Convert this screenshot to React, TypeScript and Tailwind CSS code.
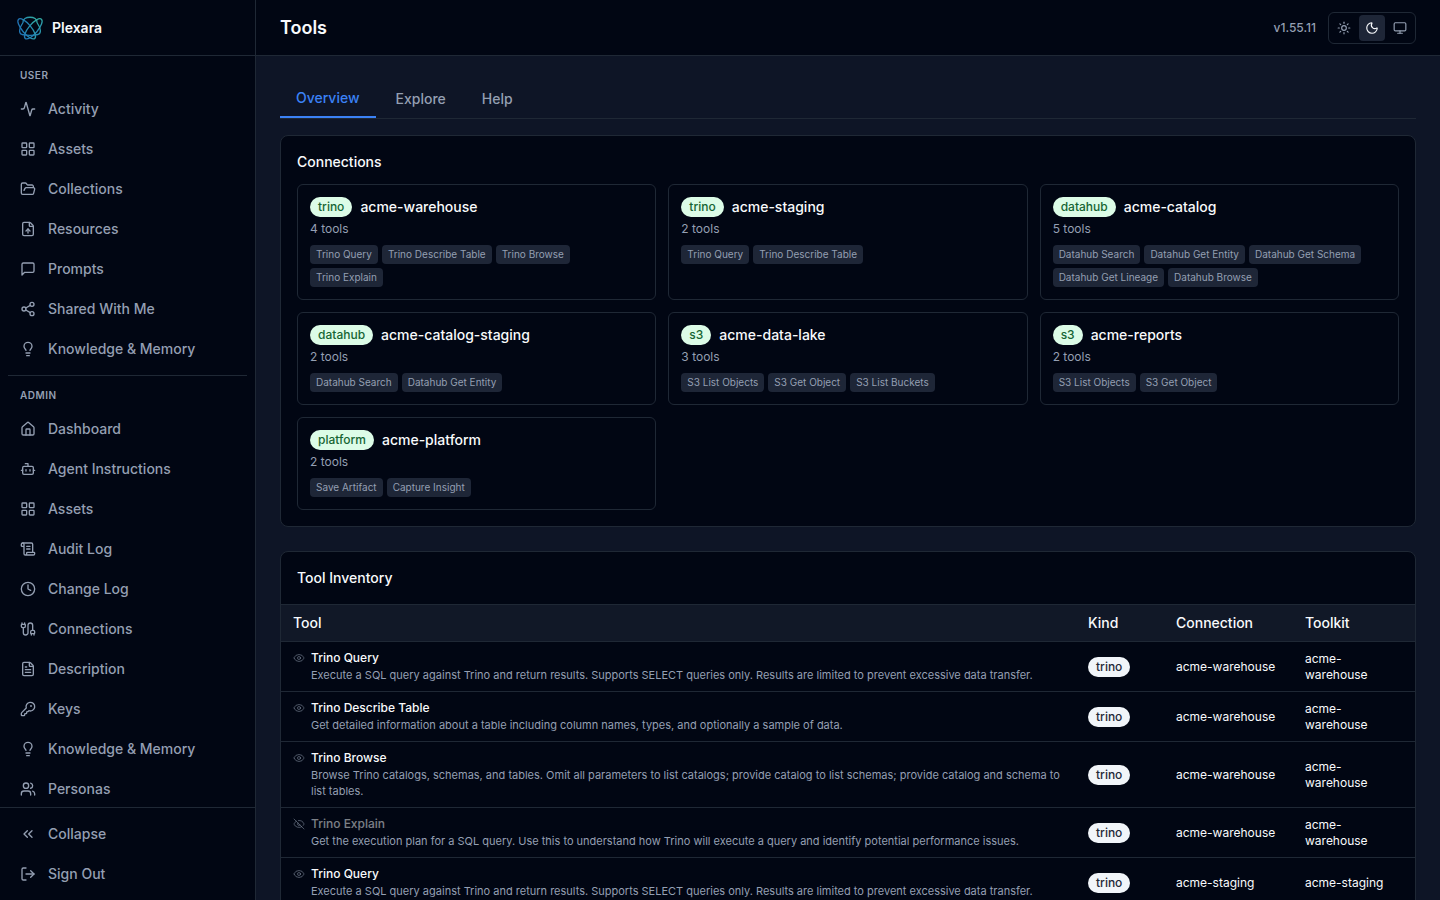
import { useState } from "react";
import type { ReactNode } from "react";
import {
  Activity,
  Bot,
  Cable,
  ChevronsLeft,
  Clock,
  Eye,
  EyeOff,
  FileText,
  FileUp,
  FolderOpen,
  House,
  KeyRound,
  LayoutGrid,
  Lightbulb,
  LogOut,
  Monitor,
  Moon,
  ScrollText,
  Share2,
  Sun,
  Users,
} from "lucide-react";

const userNav = [
  { name: "Activity", icon: Activity },
  { name: "Assets", icon: LayoutGrid },
  { name: "Collections", icon: FolderOpen },
  { name: "Resources", icon: FileUp },
  { name: "Prompts", icon: PromptIcon },
  { name: "Shared With Me", icon: Share2 },
  { name: "Knowledge & Memory", icon: Lightbulb },
];

const adminNav = [
  { name: "Dashboard", icon: House },
  { name: "Agent Instructions", icon: Bot },
  { name: "Assets", icon: LayoutGrid },
  { name: "Audit Log", icon: ScrollText },
  { name: "Change Log", icon: Clock },
  { name: "Connections", icon: Cable },
  { name: "Description", icon: FileText },
  { name: "Keys", icon: KeyRound },
  { name: "Knowledge & Memory", icon: Lightbulb },
  { name: "Personas", icon: Users },
];

const connections = [
  {
    kind: "trino",
    name: "acme-warehouse",
    tools: ["Trino Query", "Trino Describe Table", "Trino Browse", "Trino Explain"],
  },
  { kind: "trino", name: "acme-staging", tools: ["Trino Query", "Trino Describe Table"] },
  {
    kind: "datahub",
    name: "acme-catalog",
    tools: [
      "Datahub Search",
      "Datahub Get Entity",
      "Datahub Get Schema",
      "Datahub Get Lineage",
      "Datahub Browse",
    ],
  },
  { kind: "datahub", name: "acme-catalog-staging", tools: ["Datahub Search", "Datahub Get Entity"] },
  { kind: "s3", name: "acme-data-lake", tools: ["S3 List Objects", "S3 Get Object", "S3 List Buckets"] },
  { kind: "s3", name: "acme-reports", tools: ["S3 List Objects", "S3 Get Object"] },
  { kind: "platform", name: "acme-platform", tools: ["Save Artifact", "Capture Insight"] },
];

const queryDescription =
  "Execute a SQL query against Trino and return results. Supports SELECT queries only. Results are limited to prevent excessive data transfer.";

const inventory = [
  { title: "Trino Query", description: queryDescription, kind: "trino", connection: "acme-warehouse", visible: true },
  {
    title: "Trino Describe Table",
    description:
      "Get detailed information about a table including column names, types, and optionally a sample of data.",
    kind: "trino",
    connection: "acme-warehouse",
    visible: true,
  },
  {
    title: "Trino Browse",
    description:
      "Browse Trino catalogs, schemas, and tables. Omit all parameters to list catalogs; provide catalog to list schemas; provide catalog and schema to list tables.",
    kind: "trino",
    connection: "acme-warehouse",
    visible: true,
  },
  {
    title: "Trino Explain",
    description:
      "Get the execution plan for a SQL query. Use this to understand how Trino will execute a query and identify potential performance issues.",
    kind: "trino",
    connection: "acme-warehouse",
    visible: false,
  },
  { title: "Trino Query", description: queryDescription, kind: "trino", connection: "acme-staging", visible: true },
];

const tabs = ["Overview", "Explore", "Help"];

const themes = [
  { id: "light", label: "Light theme", icon: Sun },
  { id: "dark", label: "Dark theme", icon: Moon },
  { id: "system", label: "System theme", icon: Monitor },
];

function PromptIcon({ className }: { className?: string }) {
  return (
    <svg
      className={className}
      viewBox="0 0 24 24"
      fill="none"
      stroke="currentColor"
      strokeWidth="2"
      strokeLinecap="round"
      strokeLinejoin="round"
    >
      <path d="M21 15a2 2 0 0 1-2 2H7l-4 4V5a2 2 0 0 1 2-2h14a2 2 0 0 1 2 2z" />
    </svg>
  );
}

// Two crossed orbits over a rounded triangle
function Logo() {
  return (
    <svg className="h-7 w-7" viewBox="0 0 28 28" fill="none" aria-hidden="true">
      <defs>
        <linearGradient id="orbits" x1="4" y1="24" x2="24" y2="4" gradientUnits="userSpaceOnUse">
          <stop offset="0" stopColor="#1f6fb5" />
          <stop offset="0.5" stopColor="#2485b0" />
          <stop offset="1" stopColor="#35b5a0" />
        </linearGradient>
      </defs>
      <g stroke="url(#orbits)" strokeWidth="1.3">
        <ellipse cx="17.3" cy="14.8" rx="12.6" ry="4.6" transform="rotate(-50 17.3 14.8)" />
        <ellipse cx="10.7" cy="14.8" rx="12.6" ry="4.6" transform="rotate(50 10.7 14.8)" />
        <path d="M6 20.5C2 19 3.5 14 7 8.5C6 1.5 22 1.5 21 8.5C24.500 14 26 19 22 20.500C18 21.500 10 21.500 6 20.500Z" />
      </g>
    </svg>
  );
}

function NavLabel({ children }: { children: ReactNode }) {
  return (
    <div className="px-3 py-1 text-[10px] leading-[15px] font-semibold tracking-wider text-[#949fb2]">{children}</div>
  );
}

function NavList({ items }: { items: typeof userNav }) {
  return (
    <ul className="mt-1 space-y-1">
      {items.map((item) => {
        const Icon = item.icon;
        return (
          <li key={item.name}>
            <a
              href="#"
              className="flex items-center gap-3 rounded-md px-3 py-2 text-sm font-medium text-[#949fb2] hover:bg-[#1e2637]"
            >
              <Icon className="h-4 w-4 shrink-0" />
              {item.name}
            </a>
          </li>
        );
      })}
    </ul>
  );
}

function Sidebar() {
  return (
    <aside className="flex w-64 shrink-0 flex-col border-r border-[#1f2835] bg-[#010613]">
      <div className="flex h-14 shrink-0 items-center gap-2 border-b border-[#1f2835] px-4">
        <Logo />
        <span className="text-sm font-semibold text-[#f8fafc]">Plexara</span>
      </div>
      <nav className="min-h-0 flex-1 overflow-y-auto p-2 [scrollbar-width:none]">
        <NavLabel>USER</NavLabel>
        <NavList items={userNav} />
        <hr className="my-2 border-[#1f2835]" />
        <NavLabel>ADMIN</NavLabel>
        <NavList items={adminNav} />
      </nav>
      <div className="space-y-1 border-t border-[#1f2835] p-2">
        <button className="flex w-full items-center gap-3 rounded-md px-3 py-2 text-sm font-medium text-[#949fb2] hover:bg-[#1e2637]">
          <ChevronsLeft className="h-4 w-4" />
          Collapse
        </button>
        <button className="flex w-full items-center gap-3 rounded-md px-3 py-2 text-sm font-medium text-[#949fb2] hover:bg-[#1e2637]">
          <LogOut className="h-4 w-4" />
          Sign Out
        </button>
      </div>
    </aside>
  );
}

function TopBar() {
  const [theme, setTheme] = useState("dark");

  return (
    <header className="flex h-14 shrink-0 items-center justify-between border-b border-[#1f2835] bg-[#010613] px-6">
      <h1 className="text-lg font-semibold">Tools</h1>
      <div className="flex items-center gap-3">
        <span className="text-xs font-medium text-[#949fb2]">v1.55.11</span>
        <div className="flex gap-0.5 rounded-md border border-[#1f2835] p-0.5">
          {themes.map(({ id, label, icon: Icon }) => (
            <button
              key={id}
              aria-label={label}
              onClick={() => setTheme(id)}
              className={`rounded-sm p-1.5 ${theme === id ? "bg-[#1e2637] text-[#f8fafc]" : "text-[#949fb2]"}`}
            >
              <Icon className="h-3.5 w-3.5" />
            </button>
          ))}
        </div>
      </div>
    </header>
  );
}

function ConnectionCard({ kind, name, tools }: (typeof connections)[number]) {
  return (
    <div className="rounded-md border border-[#1f2835] p-3">
      <div className="flex items-center gap-2">
        <span className="rounded-full bg-[#dcfce7] px-2 py-0.5 text-xs font-medium text-[#166534]">{kind}</span>
        <span className="text-sm font-medium">{name}</span>
      </div>
      <p className="mt-1 text-xs text-[#949fb2]">{tools.length} tools</p>
      <div className="mt-2 flex flex-wrap gap-1">
        {tools.map((tool) => (
          <span key={tool} className="rounded-sm bg-[#1e2637] px-1.5 py-0.5 text-[10px] leading-[15px] text-[#949fb2]">
            {tool}
          </span>
        ))}
      </div>
    </div>
  );
}

function InventoryTable() {
  return (
    <table className="w-full table-fixed text-left">
      <thead>
        <tr className="border-y border-[#1f2835] bg-[#111827] text-sm">
          <th className="px-3 py-2 font-medium">Tool</th>
          <th className="w-[88px] px-3 py-2 font-medium">Kind</th>
          <th className="w-[129px] px-3 py-2 font-medium">Connection</th>
          <th className="w-[122px] px-3 py-2 font-medium">Toolkit</th>
        </tr>
      </thead>
      <tbody>
        {inventory.map((row, i) => (
          <tr key={i} className="border-b border-[#1f2835] text-xs">
            <td className="px-3 py-2">
              <div className="flex gap-1.5">
                <span className="flex h-4 shrink-0 items-center text-[#949fb2]/50">
                  {row.visible ? <Eye className="h-3 w-3" /> : <EyeOff className="h-3 w-3" />}
                </span>
                <div>
                  <div className={row.visible ? "font-medium" : "font-medium text-[#f8fafc]/50"}>{row.title}</div>
                  <div className="mt-px text-[11px] leading-4 text-[#949fb2]">{row.description}</div>
                </div>
              </div>
            </td>
            <td className="px-3 py-2">
              <span className="inline-block rounded-full bg-[#f1f5f9] px-2 py-0.5 font-medium text-[#1f2937]">
                {row.kind}
              </span>
            </td>
            <td className="px-3 py-2">{row.connection}</td>
            <td className="px-3 py-2">{row.connection}</td>
          </tr>
        ))}
      </tbody>
    </table>
  );
}

export default function App() {
  const [tab, setTab] = useState("Overview");

  return (
    <div className="flex h-screen overflow-hidden bg-[#0e1526] font-[Inter,sans-serif] text-[#f8fafc]">
      <Sidebar />
      <div className="flex min-w-0 flex-1 flex-col">
        <TopBar />
        <main className="min-h-0 flex-1 overflow-y-auto p-6 [scrollbar-width:none]">
          <div className="mb-4 flex gap-1 border-b border-[#1f2835]">
            {tabs.map((name) => (
              <button
                key={name}
                onClick={() => setTab(name)}
                className={`px-4 py-2 text-sm font-medium ${
                  tab === name ? "border-b-2 border-[#3b82f6] text-[#3b82f6]" : "text-[#949fb2]"
                }`}
              >
                {name}
              </button>
            ))}
          </div>

          <div className="space-y-6">
            <section className="rounded-lg border border-[#1f2835] bg-[#010613] p-4">
              <h2 className="mb-3 text-sm font-medium">Connections</h2>
              <div className="grid grid-cols-3 gap-3">
                {connections.map((c) => (
                  <ConnectionCard key={c.name} {...c} />
                ))}
              </div>
            </section>

            <section className="overflow-hidden rounded-lg border border-[#1f2835] bg-[#010613]">
              <h2 className="p-4 text-sm font-medium">Tool Inventory</h2>
              <InventoryTable />
            </section>
          </div>
        </main>
      </div>
    </div>
  );
}
